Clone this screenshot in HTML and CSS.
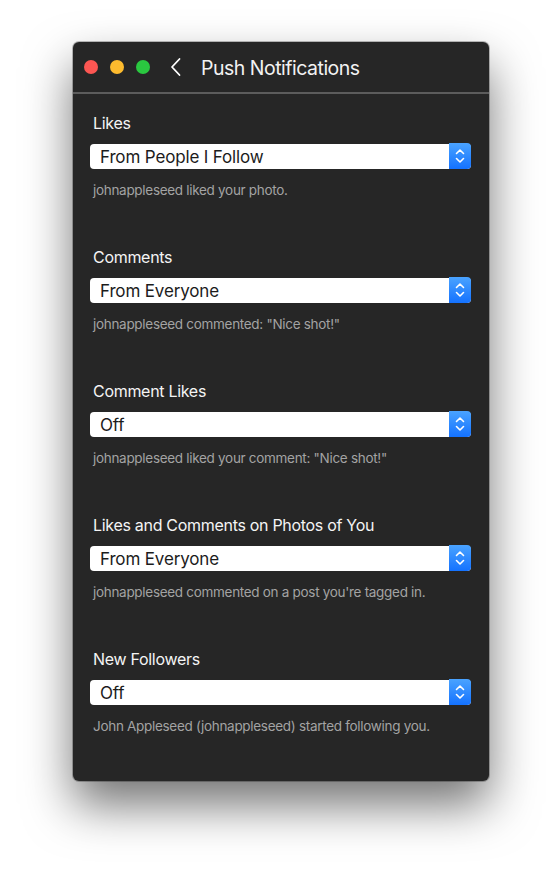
FILE: index.html
```html
<!DOCTYPE html>
<html>
<head>
<meta charset="utf-8">
<link rel="stylesheet" href="styles.css">
</head>
<body>
<div class="window">
  <div class="titlebar">
    <div class="lights">
      <span class="light red"></span>
      <span class="light yellow"></span>
      <span class="light green"></span>
    </div>
    <svg class="back" width="12" height="20" viewBox="0 0 12 20"><path d="M9.5 2 L2 10 L9.5 18" fill="none" stroke="#fff" stroke-width="1.8" stroke-linecap="round" stroke-linejoin="round"/></svg>
    <div class="title">Push Notifications</div>
  </div>
  <div class="content">
    <div class="section">
      <div class="label">Likes</div>
      <div class="select"><span class="value">From People I Follow</span><span class="stepper"><svg width="12" height="18" viewBox="0 0 12 18"><path d="M2.5 6.5 L6 3 L9.5 6.5 M2.5 11.5 L6 15 L9.5 11.5" fill="none" stroke="#fff" stroke-width="1.6" stroke-linecap="round" stroke-linejoin="round"/></svg></span></div>
      <div class="desc">johnappleseed liked your photo.</div>
    </div>
    <div class="section">
      <div class="label">Comments</div>
      <div class="select"><span class="value">From Everyone</span><span class="stepper"><svg width="12" height="18" viewBox="0 0 12 18"><path d="M2.5 6.5 L6 3 L9.5 6.5 M2.5 11.5 L6 15 L9.5 11.5" fill="none" stroke="#fff" stroke-width="1.6" stroke-linecap="round" stroke-linejoin="round"/></svg></span></div>
      <div class="desc">johnappleseed commented: "Nice shot!"</div>
    </div>
    <div class="section">
      <div class="label">Comment Likes</div>
      <div class="select"><span class="value">Off</span><span class="stepper"><svg width="12" height="18" viewBox="0 0 12 18"><path d="M2.5 6.5 L6 3 L9.5 6.5 M2.5 11.5 L6 15 L9.5 11.5" fill="none" stroke="#fff" stroke-width="1.6" stroke-linecap="round" stroke-linejoin="round"/></svg></span></div>
      <div class="desc">johnappleseed liked your comment: "Nice shot!"</div>
    </div>
    <div class="section">
      <div class="label">Likes and Comments on Photos of You</div>
      <div class="select"><span class="value">From Everyone</span><span class="stepper"><svg width="12" height="18" viewBox="0 0 12 18"><path d="M2.5 6.5 L6 3 L9.5 6.5 M2.5 11.5 L6 15 L9.5 11.5" fill="none" stroke="#fff" stroke-width="1.6" stroke-linecap="round" stroke-linejoin="round"/></svg></span></div>
      <div class="desc">johnappleseed commented on a post you're tagged in.</div>
    </div>
    <div class="section">
      <div class="label">New Followers</div>
      <div class="select"><span class="value">Off</span><span class="stepper"><svg width="12" height="18" viewBox="0 0 12 18"><path d="M2.5 6.5 L6 3 L9.5 6.5 M2.5 11.5 L6 15 L9.5 11.5" fill="none" stroke="#fff" stroke-width="1.6" stroke-linecap="round" stroke-linejoin="round"/></svg></span></div>
      <div class="desc">John Appleseed (johnappleseed) started following you.</div>
    </div>
  </div>
</div>
</body>
</html>
```

FILE: styles.css
```css
html, body {
  margin: 0;
  padding: 0;
  background: #ffffff;
}
body {
  font-family: Inter, "Open Sans", "Liberation Sans", sans-serif;
  padding: 42px 0 0 73px;
  height: 894px;
  box-sizing: border-box;
}
.window {
  width: 416px;
  height: 739px;
  background: #262626;
  border-radius: 6px;
  box-shadow: 0 0 0 1px rgba(0,0,0,0.25), 0 24px 48px rgba(0,0,0,0.55);
  overflow: hidden;
}
.titlebar {
  height: 50px;
  display: flex;
  align-items: center;
  border-bottom: 2px solid #5c5c5c;
}
.lights {
  display: flex;
  gap: 12px;
  margin-left: 11px;
}
.light {
  width: 14px;
  height: 14px;
  border-radius: 50%;
}
.red { background: #fc5652; }
.yellow { background: #fdbb2e; }
.green { background: #2ac840; }
.back {
  margin-left: 20px;
}
.title {
  margin-left: 19px;
  color: #f2f2f2;
  font-size: 19.5px;
  letter-spacing: -0.5px;
  padding-top: 2px;
}
.content {
  padding: 19px 18px 0 17px;
}
.section {
  margin-bottom: 48px;
}
.label {
  color: #f4f4f4;
  font-size: 16px;
  line-height: 20px;
  letter-spacing: -0.3px;
  padding-left: 3px;
}
.select {
  margin-top: 11px;
  height: 25px;
  background: #ffffff;
  border-radius: 4px;
  display: flex;
  align-items: center;
  justify-content: space-between;
}
.value {
  padding-left: 10px;
  font-size: 17px;
  letter-spacing: -0.15px;
  color: #1c1c1c;
}
.stepper {
  width: 22px;
  height: 26px;
  margin-top: -1px;
  background: linear-gradient(#4aa3ff, #1472ff);
  border-radius: 0 4px 4px 0;
  display: flex;
  align-items: center;
  justify-content: center;
}
.desc {
  margin-top: 12px;
  padding-left: 3px;
  font-size: 13.5px;
  line-height: 18px;
  letter-spacing: -0.3px;
  color: #a3a3a3;
}
```
